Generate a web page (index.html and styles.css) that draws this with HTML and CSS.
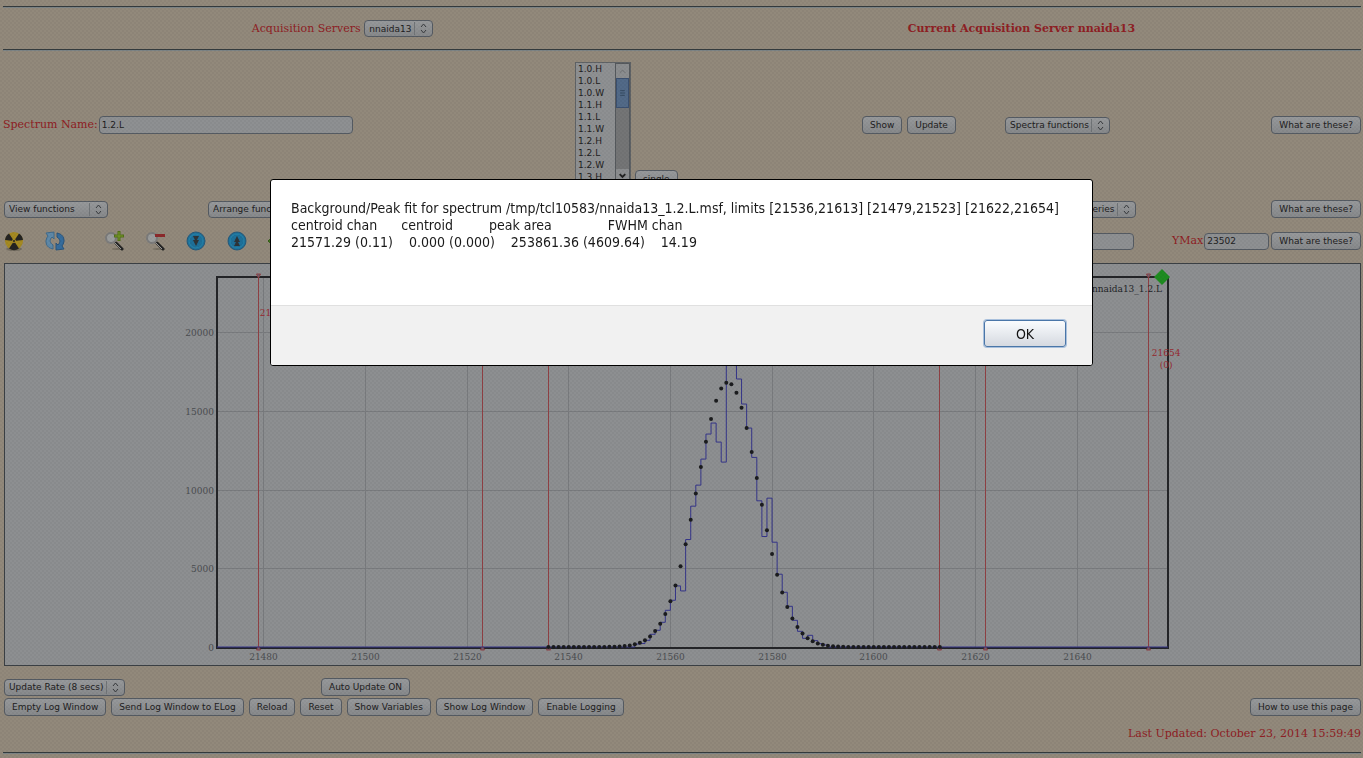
FILE: index.html
```
<!DOCTYPE html>
<html lang="en">
<head>
    <meta charset="UTF-8">
    <meta name="viewport" content="width=device-width, initial-scale=1.0">
    <title>Spectrum Browser</title>
    <link rel="stylesheet" href="styles.css">
</head>
<body>
    <hr>
    <div class="server-row">
        <div>
            <label for="servers">Acquisition Servers</label>
            <select id="servers"><option>nnaida13</option></select>
        </div>
        <strong>Current Acquisition Server nnaida13</strong>
    </div>
    <hr>

    <div class="spectrum-row">
        <div class="field">
            <label for="spectrum-name">Spectrum Name:</label>
            <input type="text" id="spectrum-name" class="name-input" value="1.2.L">
        </div>
        <div class="list-cell">
            <div class="listbox">
                <select size="10" aria-label="Spectra">
                    <option>1.0.H</option>
                    <option>1.0.L</option>
                    <option>1.0.W</option>
                    <option>1.1.H</option>
                    <option>1.1.L</option>
                    <option>1.1.W</option>
                    <option>1.2.H</option>
                    <option>1.2.L</option>
                    <option>1.2.W</option>
                    <option>1.3.H</option>
                </select>
                <div class="scrollbar">
                    <svg class="scroll-end" viewBox="0 0 14 14"><path d="M4 9l3-3 3 3" stroke="#6c6e70"/></svg>
                    <svg class="scroll-thumb" viewBox="0 0 14 30"><path d="M4 12h6M4 15h6M4 18h6" stroke="#2f4258"/></svg>
                    <div class="scroll-track"></div>
                    <svg class="scroll-end" viewBox="0 0 14 14"><path d="M4 5l3 3 3-3" stroke="#222" stroke-width="2"/></svg>
                </div>
            </div>
            <button type="button">single</button>
        </div>
        <div class="buttons">
            <button type="button">Show</button>
            <button type="button">Update</button>
        </div>
        <div class="split">
            <select aria-label="Spectra functions"><option>Spectra functions</option></select>
            <button type="button">What are these?</button>
        </div>
    </div>

    <div class="view-row">
        <select class="view-select" aria-label="View functions"><option>View functions</option></select>
        <select aria-label="Arrange functions"><option>Arrange functions</option></select>
        <select class="push" aria-label="Galleries"><option>Galleries</option></select>
        <div class="help-cell"><button type="button">What are these?</button></div>
    </div>

    <div class="tool-row">
        <div class="tools">
            <svg class="icon" viewBox="0 0 20 20">
                <ellipse cx="10" cy="18" rx="8" ry="2" fill="#756e62"/>
                <circle cx="10" cy="10" r="9" fill="#a58a22"/>
                <path d="M10 10L1 9A9 9 0 0 1 5 2.500zM10 10l5-7.500A9 9 0 0 1 19 9zM10 10l5 7.500a9 9 0 0 1-10 0z" fill="#242423"/>
                <circle cx="10" cy="10" r="2" fill="#a58a22"/>
                <circle cx="10" cy="10" r="1" fill="#242423"/>
            </svg>
            <svg class="icon" viewBox="0 0 20 20">
                <path d="M8 18C1 17-1 10 3 5L1 2l8-1v7L7 6c-3 3-2 6 1 8z" fill="#5f89a8" stroke="#3f6a8c"/>
                <path d="M12 2c7 1 9 8 5 13l2 3-8 1v-7l2 2c3-3 2-6-1-8z" fill="#366d9d" stroke="#2b557c"/>
            </svg>
            <svg class="icon zoom-in" viewBox="0 0 20 20">
                <ellipse cx="14" cy="18" rx="6" ry="1" fill="#777063"/>
                <path d="M12 12l6 6" stroke="#232323" stroke-width="3" stroke-linecap="round"/>
                <path d="M10 11l7 7" stroke="#999" stroke-width="1"/>
                <circle cx="7" cy="7" r="5" fill="#9a9c9c" stroke="#7b7b7b" stroke-width="2"/>
                <path d="M15 0v10M10 5h10" stroke="#527019" stroke-width="3"/>
                <path d="M15 1v8M11 5h8" stroke="#7a9c2a" stroke-width="1"/>
            </svg>
            <svg class="icon" viewBox="0 0 20 20">
                <ellipse cx="14" cy="18" rx="6" ry="1" fill="#777063"/>
                <path d="M12 12l6 6" stroke="#232323" stroke-width="3" stroke-linecap="round"/>
                <path d="M10 11l7 7" stroke="#999" stroke-width="1"/>
                <circle cx="7" cy="7" r="5" fill="#9a9c9c" stroke="#7b7b7b" stroke-width="2"/>
                <path d="M10 4.500h10" stroke="#8c2a2c" stroke-width="3"/>
            </svg>
            <svg class="icon" viewBox="0 0 20 20">
                <circle cx="10" cy="10" r="9" fill="#1e7099" stroke="#255a7c"/>
                <circle cx="10" cy="10" r="7" fill="none" stroke="#2584ab" stroke-width="1"/>
                <path d="M7 5h6l-2 4h2l-3 6-3-6h2z" fill="#2e3438"/>
            </svg>
            <svg class="icon" viewBox="0 0 20 20">
                <circle cx="10" cy="10" r="9" fill="#1e7099" stroke="#255a7c"/>
                <circle cx="10" cy="10" r="7" fill="none" stroke="#2584ab" stroke-width="1"/>
                <path d="M7 15h6l-2-4h2l-3-6-3 6h2z" fill="#2e3438"/>
            </svg>
            <svg class="icon" viewBox="0 0 20 20">
                <path d="M0 10l9-8v5h10v6H9v5z" fill="#47791f" stroke="#335b18"/>
            </svg>
        </div>
        <input type="text" class="range-input push" aria-label="YMin">
        <div class="field max-cell">
            <label for="ymax">YMax</label>
            <input type="text" id="ymax" class="range-input" value="23502">
        </div>
        <button type="button">What are these?</button>
    </div>

    <svg id="chart" class="chart" viewBox="0 0 1355 401"></svg>

    <div class="rate-row">
        <select aria-label="Update Rate"><option>Update Rate (8 secs)</option></select>
        <button type="button">Auto Update ON</button>
    </div>
    <div class="log-row">
        <button type="button">Empty Log Window</button>
        <button type="button">Send Log Window to ELog</button>
        <button type="button">Reload</button>
        <button type="button">Reset</button>
        <button type="button">Show Variables</button>
        <button type="button">Show Log Window</button>
        <button type="button">Enable Logging</button>
        <button type="button" class="push">How to use this page</button>
    </div>
    <p class="updated">Last Updated: October 23, 2014 15:59:49</p>
    <hr>

    <div class="backdrop"></div>
    <dialog open class="alert">
        <pre class="alert-text">Background/Peak fit for spectrum /tmp/tcl10583/nnaida13_1.2.L.msf, limits [21536,21613] [21479,21523] [21622,21654]
centroid chan      centroid         peak area              FWHM chan
21571.29 (0.11)    0.000 (0.000)    253861.36 (4609.64)    14.19</pre>
        <div class="alert-footer">
            <button type="button" class="ok-button">OK</button>
        </div>
    </dialog>

    <script src="chart.js"></script>
</body>
</html>
```
FILE: styles.css
```
* {
    box-sizing: border-box;
}

body {
    margin: 0;
    padding: 6px 2px 0 3px;
    background: #92897b;
    color: #8f2024;
    font-family: "DejaVu Serif", serif;
    font-size: 11px;
    line-height: 14px;
}

hr {
    height: 2px;
    margin: 0;
    border: 0;
    border-top: 1px solid #343b3e;
    background: #7c8486;
}

button,
select,
input {
    margin: 0;
    height: 18px;
    border: 1px solid #555b63;
    border-radius: 4px;
    background: linear-gradient(#97999b, #87898b);
    color: #1e2021;
    font-family: "DejaVu Sans", sans-serif;
    font-size: 9px;
    line-height: 12px;
    white-space: nowrap;
}

button {
    padding: 0 7px;
}

select {
    appearance: none;
    height: 17px;
    padding: 0 20px 0 4px;
    background:
        url("data:image/svg+xml,%3Csvg xmlns='http://www.w3.org/2000/svg' width='18' height='13' fill='none' stroke='%23383b3e'%3E%3Cpath d='M.5 0v13' stroke='%23707477'/%3E%3Cpath d='M7 5l2.500-3 2.500 3M7 8l2.500 3 2.500-3'/%3E%3C/svg%3E") no-repeat right 0 center,
        linear-gradient(#97999b, #87898b);
}

input {
    padding: 0 2px;
    background: #8e9092;
}

.push {
    margin-left: auto;
}

.field {
    display: flex;
    align-items: center;
    gap: 1px;
}

.server-row {
    display: grid;
    grid-template-columns: 1fr 1fr;
    align-items: center;
    justify-items: center;
    height: 41px;
}

/* spectrum selection */
.spectrum-row {
    display: grid;
    grid-template-columns: 572fr 287fr 143fr 356fr;
    align-items: center;
    min-height: 148px;
}

.name-input {
    width: 254px;
}

.list-cell {
    display: flex;
    align-items: flex-end;
    gap: 4px;
}

.listbox {
    display: flex;
    width: 56px;
    height: 126px;
    border: 1px solid #5f6366;
    background: #8e9092;
}

.listbox select {
    flex: 1;
    height: 124px;
    padding: 1px 0;
    border: 0;
    border-radius: 0;
    background: none;
    overflow: hidden;
}

.listbox option {
    min-height: 12px;
    padding: 0 2px;
    line-height: 12px;
}

.scrollbar {
    display: flex;
    flex-direction: column;
    width: 15px;
    padding-bottom: 3px;
    border: 1px solid #55595d;
    background: #747576;
    fill: none;
}

.scroll-end {
    height: 14px;
    background: #8b8d8f;
}

.scroll-thumb {
    height: 30px;
    border: 1px solid #3b5070;
    background: #526a88;
}

.scroll-track {
    flex: 1;
}

.buttons {
    display: flex;
    gap: 5px;
}

.split {
    display: flex;
    align-items: center;
    justify-content: space-between;
}

/* view functions and toolbar */
.view-row {
    display: flex;
    align-items: center;
    height: 20px;
    padding-left: 1px;
}

.view-select {
    width: 104px;
    margin-right: 100px;
}

.help-cell {
    display: flex;
    justify-content: flex-end;
    width: 225px;
}

.tool-row {
    display: flex;
    align-items: center;
    height: 44px;
    padding-left: 1px;
    gap: 2px;
}

.tools {
    display: flex;
    gap: 21px;
}

.icon {
    width: 20px;
    height: 20px;
    fill: none;
}

.zoom-in {
    margin-left: 18px;
}

.range-input {
    width: 65px;
    height: 17px;
}

.max-cell {
    justify-content: flex-end;
    width: 133px;
}

/* spectrum plot */
.chart {
    display: block;
    width: calc(100% - 1px);
    margin-left: 1px;
    border: 1px solid #3b4045;
    background: #8d8f91;
    font-size: 9px;
}

.grid-line {
    stroke: #797b7e;
}

.tick {
    fill: #4b4d50;
}

.frame {
    fill: none;
    stroke: #242528;
    stroke-width: 2;
}

.limit {
    stroke: #8f4044;
}

.limit-mark {
    fill: #667;
    stroke: #8f4044;
}

.limit-label {
    fill: #962a30;
}

.trace {
    fill: none;
    stroke: #35358a;
}

.fit {
    fill: #1b1c1e;
}

.title {
    fill: #222427;
}

.handle {
    fill: #1e8c20;
}

/* logging controls */
.rate-row {
    display: flex;
    align-items: center;
    gap: 196px;
    height: 20px;
    margin-top: 11px;
    padding-left: 1px;
}

.log-row {
    display: flex;
    align-items: center;
    gap: 5px;
    height: 20px;
    padding-left: 1px;
}

.updated {
    margin: 10px 0 11px;
    text-align: right;
}

/* modal alert */
.backdrop {
    position: fixed;
    inset: 0;
    background:
        radial-gradient(circle at 1px 1px, rgba(0, 0, 0, 0.03) 1px, transparent 1px) 0 0 / 4px 4px,
        radial-gradient(circle at 1px 1px, rgba(0, 0, 0, 0.03) 1px, transparent 1px) 2px 2px / 4px 4px;
}

.alert {
    position: fixed;
    top: 179px;
    right: 0;
    left: 0;
    width: fit-content;
    min-width: 823px;
    margin: 0 auto;
    padding: 0;
    border: 1px solid #000;
    border-radius: 3px;
    background: #fff;
    color: #1a1a1a;
    overflow: hidden;
}

.alert-text {
    min-height: 125px;
    margin: 0;
    padding: 20px;
    font-family: "DejaVu Sans Condensed", "DejaVu Sans", sans-serif;
    font-size: 14px;
    line-height: 17px;
}

.alert-footer {
    display: flex;
    justify-content: flex-end;
    padding: 14px 26px 18px;
    border-top: 1px solid #e0e0e0;
    background: #f1f1f1;
}

.ok-button {
    width: 82px;
    height: 27px;
    border-color: #4a76a8;
    border-radius: 3px;
    background: linear-gradient(#fafcfe, #d5d9e0);
    box-shadow: 0 0 0 1px #a9c0dc;
    color: #111;
    font-family: "DejaVu Sans Condensed", "DejaVu Sans", sans-serif;
    font-size: 14px;
}
```
FILE: chart.js
```
const chart = document.getElementById('chart');
const SVG_NS = 'http://www.w3.org/2000/svg';

const plot = { left: 212, right: 1163, top: 13, bottom: 383 };
const firstChannel = 21471;
const pxPerChannel = 5.083;
const yMax = 23502;

// counts per channel, starting at 21553
const counts = [190, 220, 424, 806, 1060, 1569, 2332, 2968, 3880, 3562, 6826, 8946,
    10282, 11936, 13526, 14225, 13017, 11745, 22400, 19500, 17024, 15434, 13907,
    12042, 9286, 7017, 9455, 6657, 4622, 3477, 2586, 1696, 996, 551, 742, 403, 212, 127];

const fit = { centroid: 21571.29, area: 253861.36, fwhm: 14.19 };

function x(channel) {
    return plot.left + 1 + (channel - firstChannel) * pxPerChannel;
}

function y(value) {
    return plot.bottom - value / yMax * (plot.bottom - plot.top);
}

function add(tag, attrs, text) {
    const el = document.createElementNS(SVG_NS, tag);
    for (const key in attrs) el.setAttribute(key, attrs[key]);
    if (text) el.textContent = text;
    chart.appendChild(el);
}

// grid and axis labels
for (let c = 21480; c <= 21640; c += 20) {
    const gx = Math.floor(x(c)) + 0.5;
    add('line', { class: 'grid-line', x1: gx, x2: gx, y1: plot.top, y2: plot.bottom });
    add('text', { class: 'tick', x: gx, y: plot.bottom + 13, 'text-anchor': 'middle' }, String(c));
}
for (let v = 0; v <= 20000; v += 5000) {
    const gy = Math.round(y(v)) + 0.5;
    add('line', { class: 'grid-line', x1: plot.left, x2: plot.right, y1: gy, y2: gy });
    add('text', { class: 'tick', x: plot.left - 3, y: gy + 3, 'text-anchor': 'end' }, String(v));
}

add('rect', {
    class: 'frame', x: plot.left, y: plot.top,
    width: plot.right - plot.left, height: plot.bottom - plot.top + 1
});

// background and peak limits
[21479, 21523, 21536, 21613, 21622, 21654].forEach(c => {
    const lx = Math.floor(x(c)) + 0.5;
    add('line', { class: 'limit', x1: lx, x2: lx, y1: plot.top, y2: plot.bottom });
    add('path', { class: 'limit-mark', d: `M${lx - 2} ${plot.top - 3}h4l-2 4z` });
    add('path', { class: 'limit-mark', d: `M${lx - 2} ${plot.bottom + 3}h4l-2-4z` });
});
add('text', { class: 'limit-label', x: x(21479) + 1, y: 52 }, '21479');
add('text', { class: 'limit-label', x: x(21654) + 18, y: 92, 'text-anchor': 'middle' }, '21654');
add('text', { class: 'limit-label', x: x(21654) + 18, y: 104, 'text-anchor': 'middle' }, '(0)');

// histogram
let d = `M${plot.left} ${y(0)}H${x(21553)}`;
counts.forEach((n, i) => {
    d += `V${y(n)}H${x(21554 + i)}`;
});
d += `V${y(0)}H${plot.right}`;
add('path', { class: 'trace', d: d });

// gaussian fit
const sigma = fit.fwhm / 2.3548;
const height = fit.area / (sigma * Math.sqrt(2 * Math.PI));
for (let c = 21536; c <= 21613; c++) {
    const v = height * Math.exp(-((c - fit.centroid) ** 2) / (2 * sigma * sigma));
    add('circle', { class: 'fit', cx: x(c), cy: y(v), r: 2 });
}

add('text', { class: 'title', x: plot.right - 6, y: 28, 'text-anchor': 'end' }, 'nnaida13_1.2.L');
add('path', { class: 'handle', d: `M${plot.right - 6} 5l8 8-8 8-8-8z` });
```
